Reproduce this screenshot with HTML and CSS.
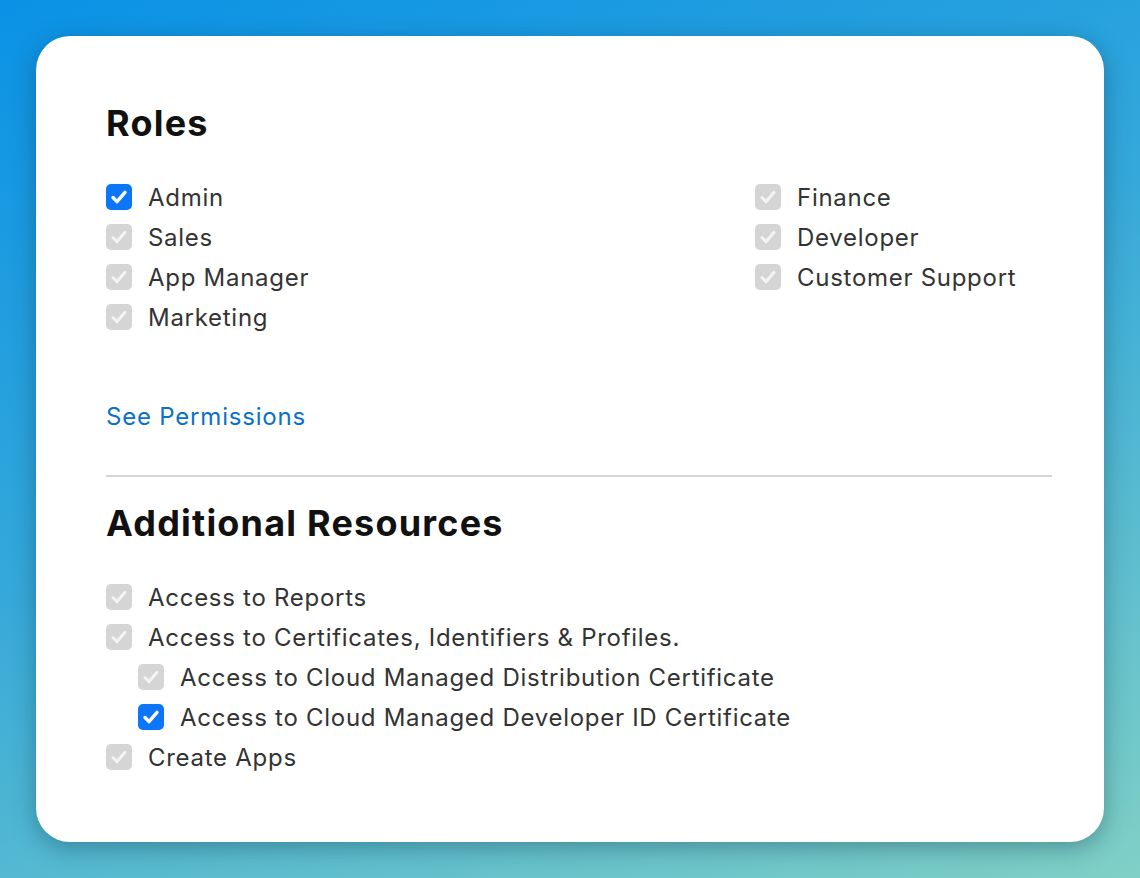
FILE: index.html
```html
<!DOCTYPE html>
<html lang="en">
  <head>
    <meta charset="UTF-8" />
    <meta name="viewport" content="width=device-width, initial-scale=1.0" />
    <title>Roles</title>
    <link rel="stylesheet" href="styles.css">
  </head>
  <body>
    <div class="wrapper">
      <div class="card">
        <h2>Roles</h2>
        <div class="roles">
          <div class="col">
            <div class="row"><span class="box on"><svg viewBox="0 0 26 26"><path d="M7 13.5l4 4.2 8-9.4" /></svg></span>Admin</div>
            <div class="row"><span class="box"><svg viewBox="0 0 26 26"><path d="M7 13.5l4 4.2 8-9.4" /></svg></span>Sales</div>
            <div class="row"><span class="box"><svg viewBox="0 0 26 26"><path d="M7 13.5l4 4.2 8-9.4" /></svg></span>App Manager</div>
            <div class="row"><span class="box"><svg viewBox="0 0 26 26"><path d="M7 13.5l4 4.2 8-9.4" /></svg></span>Marketing</div>
          </div>
          <div class="col">
            <div class="row"><span class="box"><svg viewBox="0 0 26 26"><path d="M7 13.5l4 4.2 8-9.4" /></svg></span>Finance</div>
            <div class="row"><span class="box"><svg viewBox="0 0 26 26"><path d="M7 13.5l4 4.2 8-9.4" /></svg></span>Developer</div>
            <div class="row"><span class="box"><svg viewBox="0 0 26 26"><path d="M7 13.5l4 4.2 8-9.4" /></svg></span>Customer Support</div>
          </div>
        </div>
        <a class="link" href="#">See Permissions</a>
        <hr />
        <h2>Additional Resources</h2>
        <div class="col">
          <div class="row"><span class="box"><svg viewBox="0 0 26 26"><path d="M7 13.5l4 4.2 8-9.4" /></svg></span>Access to Reports</div>
          <div class="row"><span class="box"><svg viewBox="0 0 26 26"><path d="M7 13.5l4 4.2 8-9.4" /></svg></span>Access to Certificates, Identifiers &amp; Profiles.</div>
          <div class="row sub"><span class="box"><svg viewBox="0 0 26 26"><path d="M7 13.5l4 4.2 8-9.4" /></svg></span>Access to Cloud Managed Distribution Certificate</div>
          <div class="row sub"><span class="box on"><svg viewBox="0 0 26 26"><path d="M7 13.5l4 4.2 8-9.4" /></svg></span>Access to Cloud Managed Developer ID Certificate</div>
          <div class="row"><span class="box"><svg viewBox="0 0 26 26"><path d="M7 13.5l4 4.2 8-9.4" /></svg></span>Create Apps</div>
        </div>
      </div>
    </div>
  </body>
</html>
```

FILE: styles.css
```css
html,
body {
  margin: 0;
  padding: 0;
}
body {
  font-family: Inter, "Noto Sans", sans-serif;
  color: #333;
}
.wrapper {
  width: 1140px;
  height: 878px;
  box-sizing: border-box;
  padding: 36px;
  background: linear-gradient(160deg, #0a92e6 0%, #34a8da 45%, #80d0c5 100%);
}
.card {
  background-color: white;
  border-radius: 34px;
  height: 806px;
  box-sizing: border-box;
  padding: 65px 52px 0 70px;
  box-shadow: 0 6px 24px rgba(0, 40, 60, 0.35);
}
h2 {
  margin: 0;
  font-size: 36px;
  line-height: 44px;
  font-weight: 700;
  color: #111;
  letter-spacing: 1.2px;
}
.roles {
  display: grid;
  grid-template-columns: 649px 1fr;
  margin-top: 32px;
}
h2 + .col {
  margin-top: 32px;
}
.row {
  display: flex;
  align-items: center;
  height: 40px;
  font-size: 24px;
  letter-spacing: 0.72px;
  gap: 16px;
}
.row.sub {
  padding-left: 32px;
}
.box {
  width: 26px;
  height: 26px;
  border-radius: 5px;
  background-color: #d5d5d5;
  flex: none;
}
.box svg {
  display: block;
  width: 26px;
  height: 26px;
  fill: none;
  stroke: #f4f4f4;
  stroke-width: 3;
  stroke-linecap: round;
  stroke-linejoin: round;
}
.box.on {
  background-color: #0b76f7;
}
.box.on svg {
  stroke: white;
  stroke-width: 3.4;
}
.link {
  display: block;
  margin-top: 60px;
  font-size: 24px;
  line-height: 40px;
  letter-spacing: 0.8px;
  color: #0b70c8;
  text-decoration: none;
}
hr {
  border: none;
  border-top: 2px solid #d6d6d6;
  margin: 38px 0 24px;
}
```
